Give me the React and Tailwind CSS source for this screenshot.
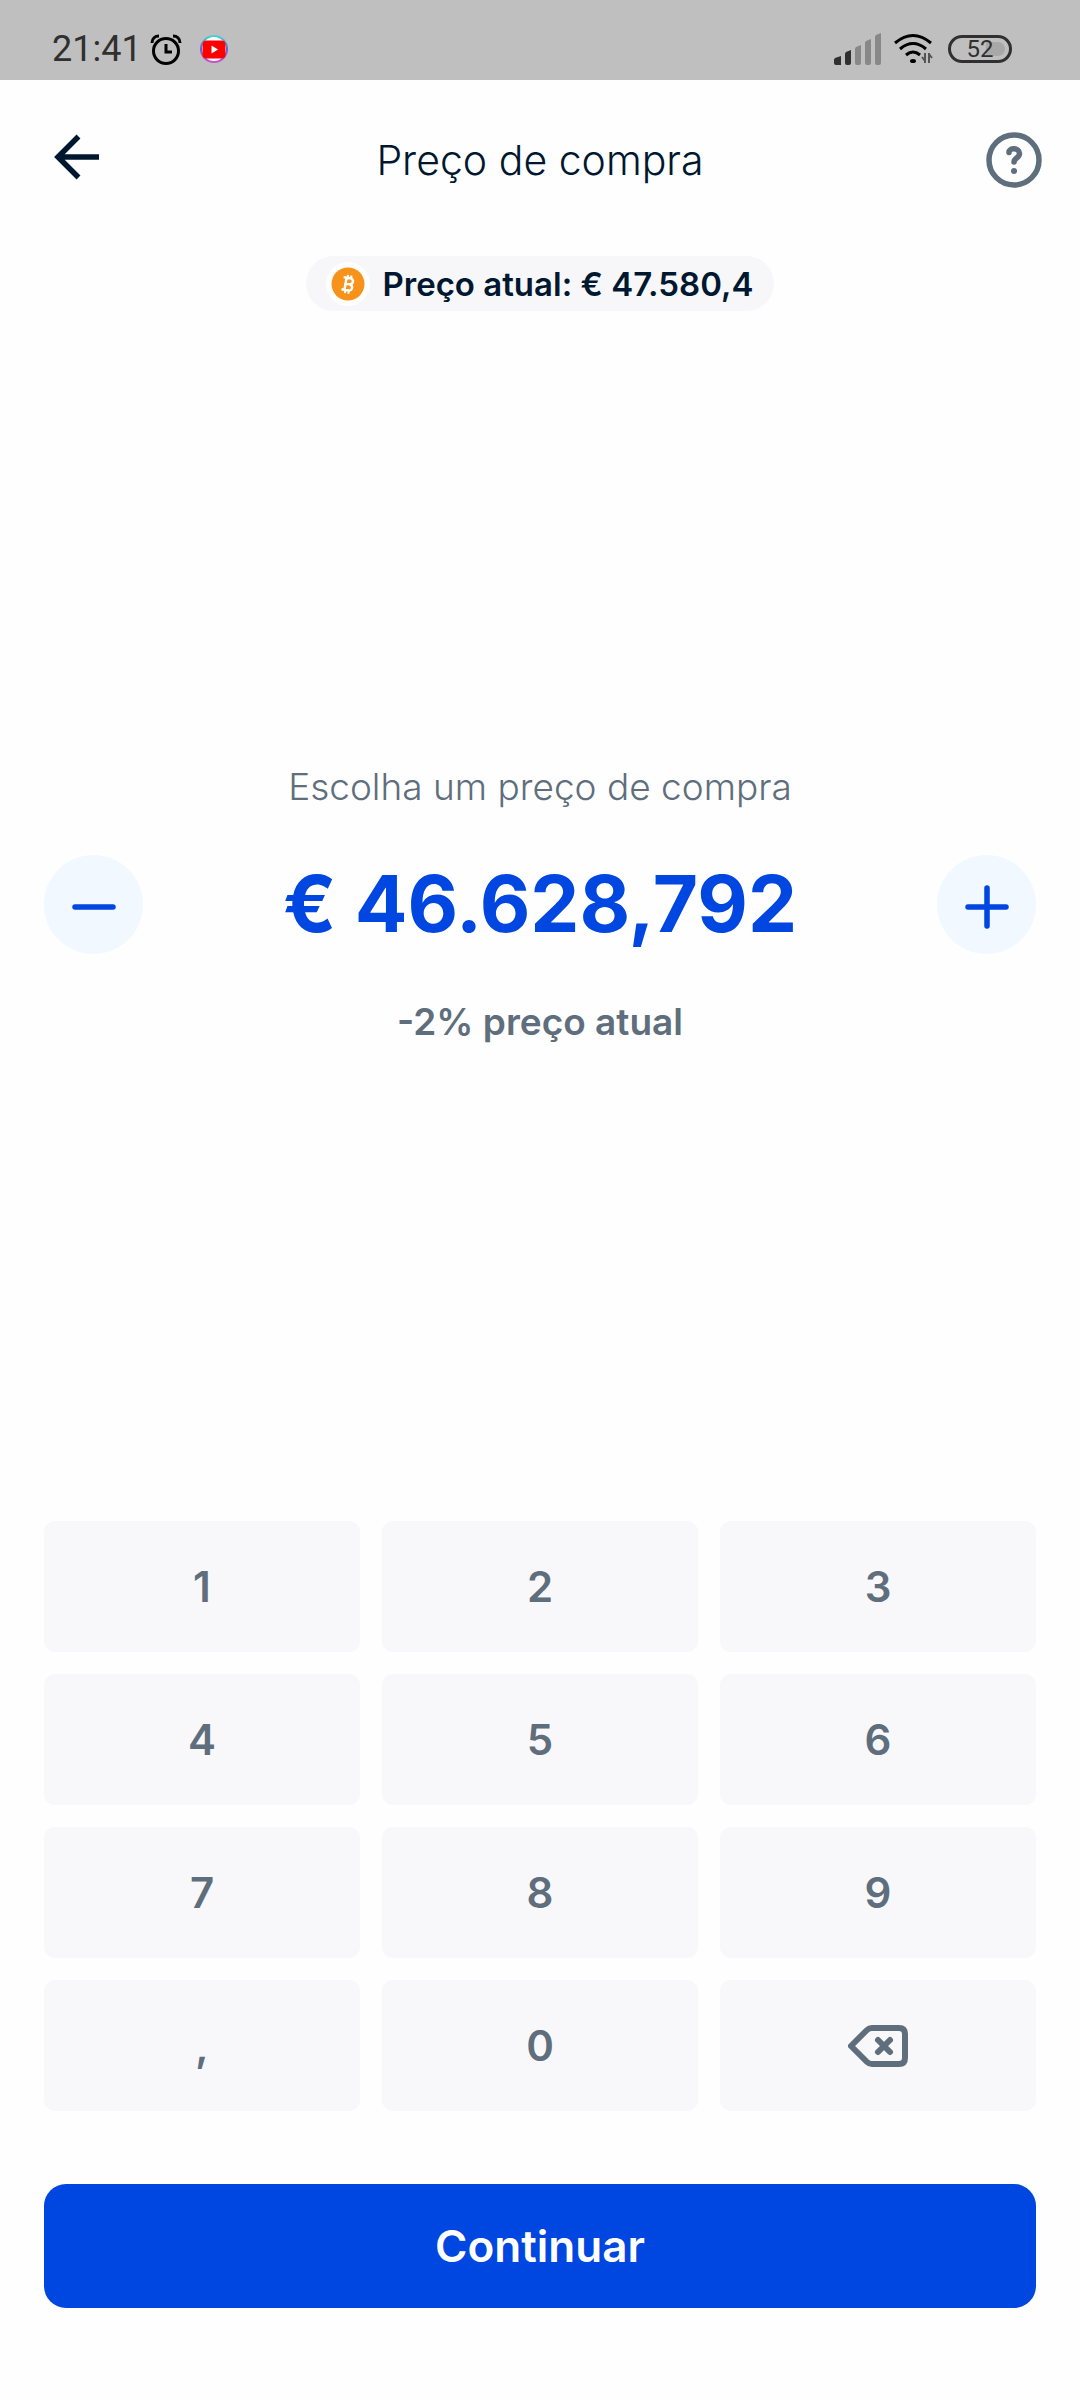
import React, { useState } from "react";

const KEYS = ["1", "2", "3", "4", "5", "6", "7", "8", "9", ",", "0"];

const StatusBar = () => (
  <div className="flex h-20 items-center justify-between bg-[#bfbfbf] pl-[52px] pr-[68px] pt-[18px] font-[Roboto,sans-serif] text-[#303030]">
    <div className="flex items-center">
      <span className="text-[36px] leading-10">21:41</span>
      <svg className="ml-2 size-8" viewBox="0 0 32 32" fill="none" stroke="#000">
        <circle cx="16" cy="18" r="12.5" strokeWidth="3" />
        <path d="M16 11v8h6" strokeWidth="3" />
        <path d="M2 10C2 5.500 5 3 9 3M30 10C30 5.500 27 3 23 3" strokeWidth="3" />
      </svg>
      <svg className="ml-4 size-8" viewBox="0 0 32 32">
        <defs>
          <linearGradient id="ring" x1="0" y1="0" x2="0" y2="1">
            <stop offset="0" stopColor="#4fd0d0" />
            <stop offset="0.500" stopColor="#5b62d8" />
            <stop offset="1" stopColor="#c850c8" />
          </linearGradient>
        </defs>
        <circle cx="16" cy="16" r="13" fill="#fff" stroke="url(#ring)" strokeWidth="2" />
        <rect x="4.500" y="7.500" width="23" height="18" rx="4" fill="#f00" />
        <path d="M13.500 12.500v8l6.500-4z" fill="#fff" />
      </svg>
    </div>
    <div className="flex items-center">
      <svg className="h-8 w-12" viewBox="0 0 48 32">
        <path d="M0 27q0-1 1-2l6-2v9H2q-2 0-2-2zM11 21q0-1 1-2l5-2v13q0 2-2 2h-2q-2 0-2-2z" fill="#303030" />
        <path d="M21 16q0-1 1-2l5-2v18q0 2-2 2h-2q-2 0-2-2zM31 10q0-1 1-2l5-2v24q0 2-2 2h-2q-2 0-2-2zM41 4q0-1 1-2l5-2v30q0 2-2 2h-2q-2 0-2-2z" fill="#888" />
      </svg>
      <svg className="ml-3 h-8 w-10" viewBox="0 0 40 32" fill="none" stroke="#000">
        <path d="M1 10Q19 -5 37 10" strokeWidth="3" />
        <path d="M6 16Q19 5 32 16" strokeWidth="3" />
        <path d="M12 22Q19 16 26 22" strokeWidth="3" />
        <ellipse cx="19" cy="28" rx="3" ry="2" fill="#000" stroke="none" />
        <path d="M31 20v10M35 20v10M28 24l3 4M38 25l-3-4" stroke="#555" strokeWidth="2" />
      </svg>
      <div className="ml-3.5 flex h-7 w-16 items-center justify-center rounded-full border-3 border-[#303030] bg-linear-to-r from-[#bfbfbf] from-60% to-[#a8a8a8] to-60% bg-clip-content p-1 text-[24px] leading-6">
        52
      </div>
    </div>
  </div>
);

const BitcoinIcon = () => (
  <svg className="size-11" viewBox="0 0 44 44">
    <circle cx="22" cy="22" r="22" fill="#fff" />
    <circle cx="22" cy="22" r="16.500" fill="#f7931a" />
    <g transform="rotate(10 22 22)" fill="none" stroke="#fff" strokeWidth="2.500">
      <path d="M16.500 16H23.500a3 3 0 0 1 0 6H19M23.500 22a3.200 3.200 0 0 1 0 6.400H16.500M19.500 16V28.400" />
      <path d="M20.500 13v3M24 13v3M20.500 28v3.500M24 28v3.500" strokeWidth="2" />
    </g>
  </svg>
);

const App = () => {
  const [price, setPrice] = useState("46.628,792");

  // Append a digit or the decimal comma
  const pressKey = (key) => {
    if (key === "," && price.includes(",")) return;
    setPrice(price + key);
  };

  return (
    <div className="flex min-h-screen flex-col bg-[#fefefe] font-[Inter,sans-serif] text-[#5f6e7c]">
      <StatusBar />

      {/* Header */}
      <header className="flex h-40 items-center justify-between px-[38px] text-[#00182f]">
        <button aria-label="Voltar" className="w-16">
          <svg className="h-14 w-16" viewBox="0 0 64 56" fill="none" stroke="currentColor" strokeWidth="5.500">
            <path d="M61 25H21M40.500 4.500L20 25l20.500 20.500" />
          </svg>
        </button>
        <h1 className="text-[41px] font-light leading-12">Preço de compra</h1>
        <button aria-label="Ajuda" className="flex w-16 justify-end text-[#5f6e7c]">
          <svg className="size-14" viewBox="0 0 56 56" fill="none" stroke="currentColor" strokeLinecap="round">
            <circle cx="28" cy="28" r="25" strokeWidth="5.500" />
            <path d="M23 20.500C23 15 33.500 15.500 33.500 21.500C33.500 26 28 26 28 30" strokeWidth="5.500" />
            <circle cx="28" cy="39" r="3" fill="currentColor" stroke="none" />
          </svg>
        </button>
      </header>

      <div className="mt-4 flex h-[55px] items-center gap-3 self-center rounded-full bg-[#f7f7fa] px-5 text-[33px] font-semibold leading-10 text-[#00182f]">
        <BitcoinIcon />
        <span>Preço atual: € 47.580,4</span>
      </div>

      {/* Price picker */}
      <main className="flex flex-1 flex-col items-center justify-center px-11 pb-6">
        <p className="text-[37px] font-light leading-12">Escolha um preço de compra</p>
        <div className="my-11 flex w-full items-center justify-between text-[#0046e0]">
          <button aria-label="Diminuir" className="flex size-[99px] items-center justify-center rounded-full bg-[#f1f8ff]">
            <svg className="mt-1 size-12" viewBox="0 0 48 48" stroke="currentColor" strokeWidth="5.500" strokeLinecap="round">
              <path d="M5 25h38" />
            </svg>
          </button>
          <output className="text-[78px] font-bold leading-none">€ {price}</output>
          <button aria-label="Aumentar" className="flex size-[99px] items-center justify-center rounded-full bg-[#f1f8ff]">
            <svg className="mt-1 size-12" viewBox="0 0 48 48" stroke="currentColor" strokeWidth="5.500" strokeLinecap="round">
              <path d="M5 25h38M24 6v38" />
            </svg>
          </button>
        </div>
        <p className="text-[37px] font-semibold leading-12">-2% preço atual</p>
      </main>

      {/* Keypad */}
      <div className="grid grid-cols-3 gap-[22px] px-11">
        {KEYS.map((key) => (
          <button
            key={key}
            onClick={() => pressKey(key)}
            className="h-[131px] rounded-[11px] bg-[#f8f8fa] text-[42px] font-semibold"
          >
            {key}
          </button>
        ))}
        <button
          aria-label="Apagar"
          onClick={() => setPrice(price.slice(0, -1))}
          className="flex h-[131px] items-center justify-center rounded-[11px] bg-[#f8f8fa]"
        >
          <svg className="h-11 w-15" viewBox="0 0 60 44" fill="none" stroke="currentColor" strokeWidth="6" strokeLinejoin="round" strokeLinecap="round">
            <path d="M3 22L19 6Q21 4 24 4H51Q57 4 57 10V34Q57 40 51 40H24Q21 40 19 38Z" />
            <path d="M30 16l12 12M42 16l-12 12" />
          </svg>
        </button>
      </div>

      <div className="px-11 pb-23 pt-[73px]">
        <button className="h-31 w-full rounded-[22px] bg-[#0046e0] text-[44px] font-semibold text-white">Continuar</button>
      </div>
    </div>
  );
};

export default App;
